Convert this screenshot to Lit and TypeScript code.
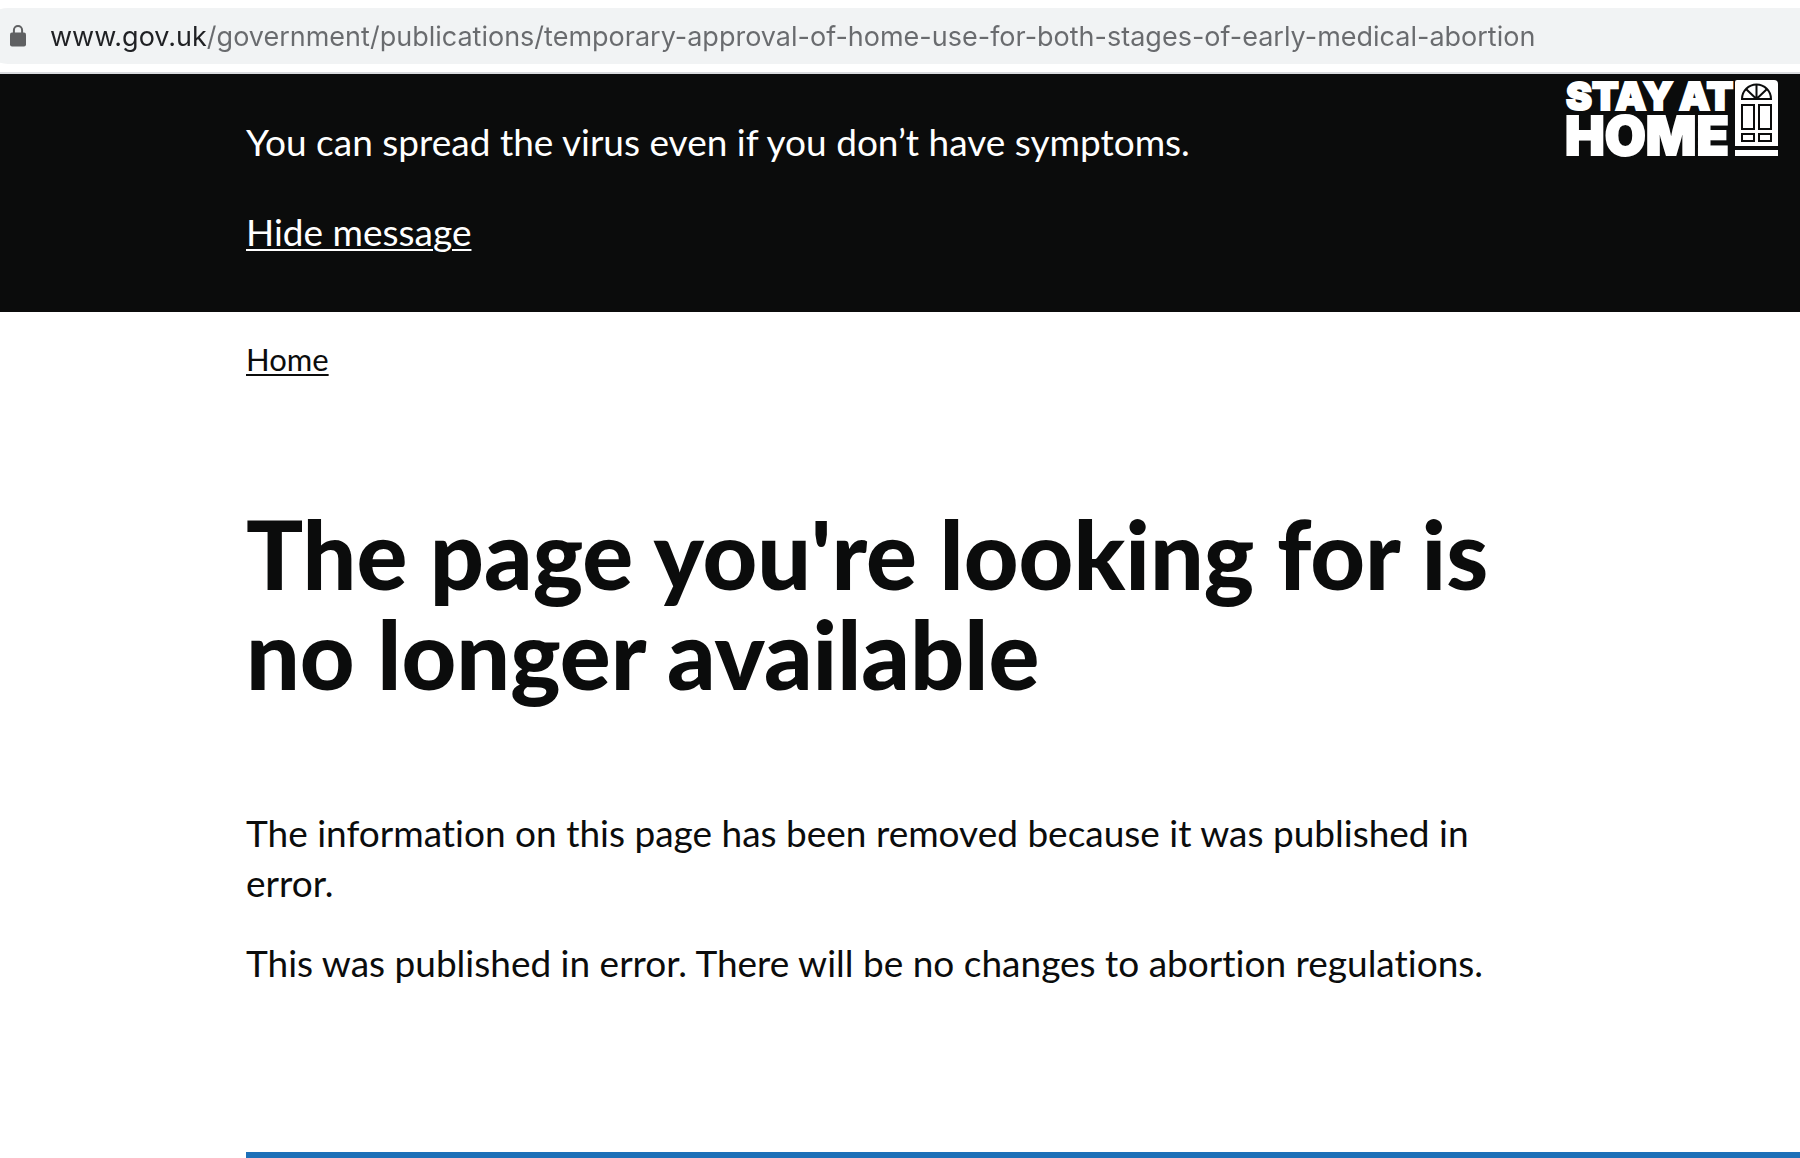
import { LitElement, html, css } from "lit";
import { customElement, property, state } from "lit/decorators.js";

@customElement("address-bar")
class AddressBar extends LitElement {
  @property() url = "";

  static styles = css`
    :host {
      display: block;
      padding: 8px 0;
      background: #fff;
      border-bottom: 2px solid #dadce0;
    }
    .field {
      display: flex;
      align-items: center;
      gap: 24px;
      height: 56px;
      margin-left: -20px;
      padding-left: 30px;
      background: #f1f3f4;
      border-radius: 28px 0 0 28px;
    }
    .lock {
      flex: none;
      width: 16px;
      height: 22px;
    }
    .url {
      flex: 1;
      min-width: 0;
      height: 40px;
      padding: 2px 0 0;
      border: 0;
      outline: 0;
      font: 400 27px/40px Inter, sans-serif;
      color: transparent;
      caret-color: #202124;
      background: linear-gradient(to right, #202124 156px, #696b6e 156px);
      -webkit-background-clip: text;
      background-clip: text;
    }
  `;

  render() {
    return html`
      <div class="field">
        <svg class="lock" viewBox="0 0 16 22" aria-hidden="true">
          <path d="M3.9 9V5.2a4.1 4.1 0 0 1 8.2 0V9" fill="none" stroke="#5f6062" stroke-width="2" />
          <rect x="0" y="7.5" width="16" height="14" rx="2" fill="#5f6062" />
        </svg>
        <input class="url" type="text" aria-label="Address" spellcheck="false" .value=${this.url} />
      </div>
    `;
  }
}

@customElement("stay-home-logo")
class StayHomeLogo extends LitElement {
  static styles = css`
    :host {
      display: block;
    }
    .logo {
      display: block;
      width: 212px;
      height: 76px;
      overflow: visible;
    }
    .word {
      font-family: Inter, sans-serif;
      font-weight: 900;
      fill: #fff;
      stroke: #fff;
      stroke-width: 2px;
    }
    .small {
      font-size: 39px;
    }
    .large {
      font-size: 53px;
    }
  `;

  render() {
    return html`
      <svg class="logo" viewBox="0 0 212 76" role="img" aria-label="Stay at home">
        <text class="word small" x="0" y="30">STAY</text>
        <text class="word small" x="113" y="30">AT</text>
        <text class="word large" x="-1" y="75">HOME</text>
        <path fill="#fff" d="M171 0h37a4 4 0 0 1 4 4v62h-43V2a2 2 0 0 1 2-2z" />
        <rect x="169" y="70" width="43" height="6" fill="#fff" />
        <g fill="none" stroke="#0b0c0c" stroke-width="2">
          <path d="M176 19a14.500 14.500 0 0 1 29 0z" />
          <path d="M190.500 19V5M190.500 19L180 9M190.500 19L201 9" />
          <rect x="176" y="25" width="12" height="24" />
          <rect x="193" y="25" width="12" height="24" />
          <rect x="176" y="54" width="12" height="7" />
          <rect x="193" y="54" width="12" height="7" />
        </g>
      </svg>
    `;
  }
}

@customElement("app-root")
class AppRoot extends LitElement {
  @state() private messageShown = true;

  static styles = css`
    :host {
      display: block;
      min-height: 100vh;
      overflow-x: hidden;
      background: #fff;
      color: #0b0c0c;
      font: 400 37px/50px Lato, sans-serif;
      font-variant-ligatures: none;
    }
    .banner {
      display: flex;
      justify-content: space-between;
      align-items: flex-start;
      padding: 6px 22px 55px 246px;
      background: #0b0c0c;
      color: #fff;
    }
    .message {
      display: flex;
      flex-direction: column;
      align-items: flex-start;
      gap: 40px;
      padding-top: 37px;
    }
    p,
    h1 {
      margin: 0;
    }
    a {
      color: inherit;
      text-decoration: underline;
      text-decoration-thickness: 2px;
      text-underline-offset: 3px;
    }
    .page {
      padding-left: 246px;
    }
    .breadcrumbs {
      padding-top: 27px;
      font-size: 31px;
      line-height: 40px;
    }
    .title {
      max-width: 1280px;
      padding-top: 124px;
      font-size: 95px;
      line-height: 100px;
      font-weight: 900;
    }
    .body {
      display: flex;
      flex-direction: column;
      gap: 30px;
      max-width: 1280px;
      padding: 105px 0 164px;
    }
    .rule {
      height: 6px;
      margin: 0;
      border: 0;
      background: #1d70b8;
    }
  `;

  private hide(e: Event) {
    e.preventDefault();
    this.messageShown = false;
  }

  render() {
    return html`
      <address-bar
        url="www.gov.uk/government/publications/temporary-approval-of-home-use-for-both-stages-of-early-medical-abortion"
      ></address-bar>
      ${this.messageShown
        ? html`<section class="banner">
            <div class="message">
              <p>You can spread the virus even if you don’t have symptoms.</p>
              <a href="#" @click=${this.hide}>Hide message</a>
            </div>
            <stay-home-logo></stay-home-logo>
          </section>`
        : null}
      <main class="page">
        <nav class="breadcrumbs"><a href="/">Home</a></nav>
        <h1 class="title">The page you're looking for is no longer available</h1>
        <div class="body">
          <p>The information on this page has been removed because it was published in error.</p>
          <p>This was published in error. There will be no changes to abortion regulations.</p>
        </div>
        <hr class="rule" />
      </main>
    `;
  }
}
